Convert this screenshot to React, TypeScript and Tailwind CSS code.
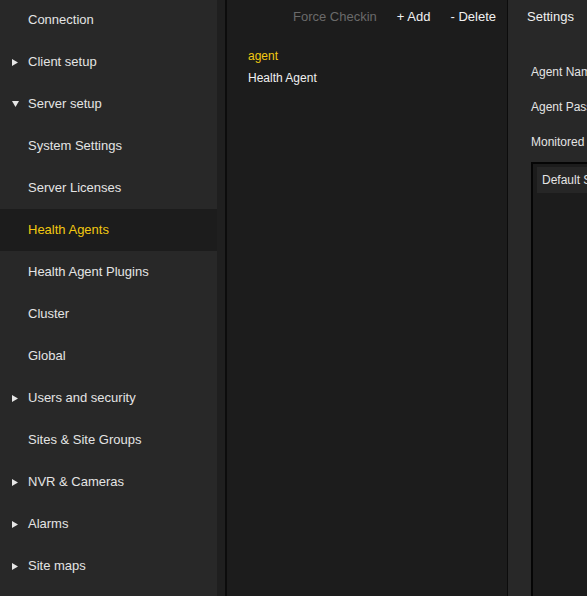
import React from "react";

type Item = { label: string; arrow?: "right" | "down"; selected?: boolean };

const items: Item[] = [
  { label: "Connection" },
  { label: "Client setup", arrow: "right" },
  { label: "Server setup", arrow: "down" },
  { label: "System Settings" },
  { label: "Server Licenses" },
  { label: "Health Agents", selected: true },
  { label: "Health Agent Plugins" },
  { label: "Cluster" },
  { label: "Global" },
  { label: "Users and security", arrow: "right" },
  { label: "Sites & Site Groups" },
  { label: "NVR & Cameras", arrow: "right" },
  { label: "Alarms", arrow: "right" },
  { label: "Site maps", arrow: "right" },
];

function Arrow({ dir }: { dir: "right" | "down" }) {
  return dir === "right" ? (
    <svg width="6" height="7" viewBox="0 0 6 7" className="block">
      <path d="M0 0 L6 3.5 L0 7 Z" fill="#e6e6e6" />
    </svg>
  ) : (
    <svg width="7" height="6" viewBox="0 0 7 6" className="block">
      <path d="M0 0 L7 0 L3.5 6 Z" fill="#e6e6e6" />
    </svg>
  );
}

export default function App() {
  return (
    <div
      className="flex h-[596px] w-[587px] overflow-hidden text-[13px] text-[#e4e4e4]"
      style={{ fontFamily: '"Liberation Sans", Arial, sans-serif' }}
    >
      {/* Sidebar */}
      <div className="w-[217px] shrink-0 bg-[#282828]">
        <div className="mt-[-1px] flex flex-col">
          {items.map((it) => (
            <div
              key={it.label}
              className={`flex h-[42px] items-center ${
                it.selected ? "bg-[#1c1c1c] text-[#f2c811]" : ""
              }`}
            >
              <div className="flex w-[28px] justify-start pl-[12px]">
                {it.arrow ? <Arrow dir={it.arrow} /> : null}
              </div>
              <span>{it.label}</span>
            </div>
          ))}
        </div>
      </div>
      <div className="w-[8px] shrink-0 bg-[#1f1f1f]" />
      <div className="w-[2px] shrink-0 bg-[#0c0c0c]" />

      {/* Middle list */}
      <div className="flex w-[280px] shrink-0 flex-col bg-[#1c1c1c]">
        <div className="flex h-[33px] items-center justify-end gap-[20px] pr-[11px]">
          <span className="text-[#6a6a6a]">Force Checkin</span>
          <span className="text-[#f0f0f0]">+ Add</span>
          <span className="text-[#f0f0f0]">- Delete</span>
        </div>
        <div className="flex flex-col pl-[21px] pt-[15px] text-[12px]">
          <div className="h-[22px] leading-[16px] text-[#f2c811]">agent</div>
          <div className="leading-[16px] text-[#f0f0f0]">Health Agent</div>
        </div>
      </div>
      <div className="w-[1px] shrink-0 bg-[#0c0c0c]" />

      {/* Right settings */}
      <div className="flex min-w-0 flex-1 flex-col bg-[#282828]">
        <div className="flex h-[33px] shrink-0 items-center pl-[19px] text-[#f0f0f0]">Settings</div>
        <div className="flex flex-col pl-[23px] pt-[22px] text-[12px] text-[#e4e4e4]">
          <div className="h-[35px] whitespace-nowrap leading-[35px]">Agent Name</div>
          <div className="h-[35px] whitespace-nowrap leading-[35px]">Agent Password</div>
          <div className="h-[35px] whitespace-nowrap leading-[35px]">Monitored Servers</div>
        </div>
        <div className="ml-[23px] mt-[2px] flex-1 border-[2px] border-r-0 border-b-0 border-[#050505] bg-[#1c1c1c] pl-[4px] pt-[3px]">
          <div className="flex h-[26px] items-center whitespace-nowrap bg-[#262626] pl-[5px] text-[12px] text-[#e4e4e4]">
            Default Settings
          </div>
        </div>
      </div>
    </div>
  );
}
